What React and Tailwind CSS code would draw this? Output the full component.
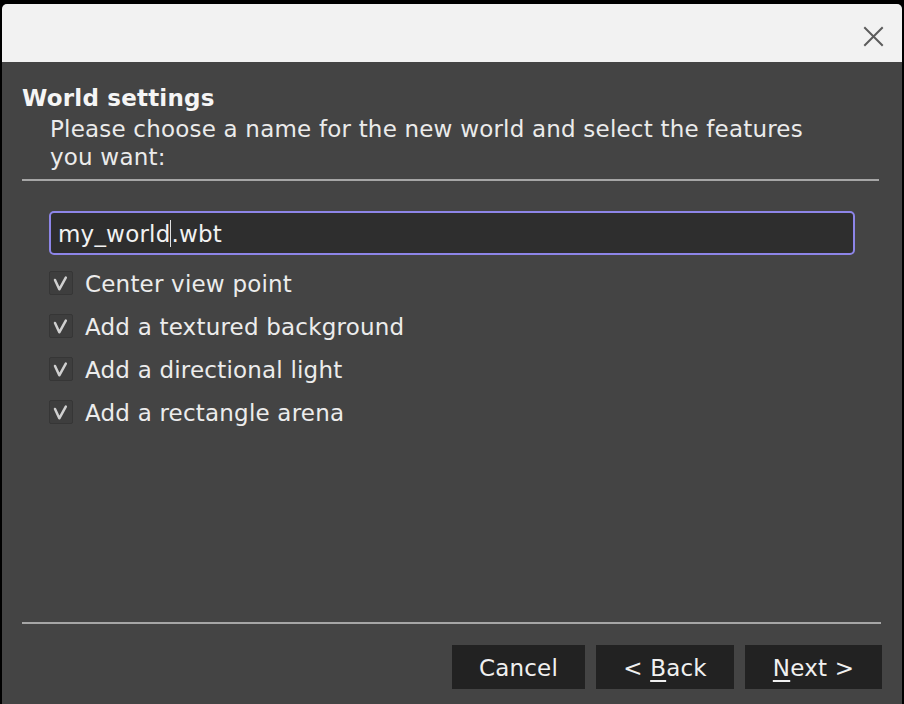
import React from "react";

function Check() {
  return (
    <div className="w-[24px] h-[24px] shrink-0 rounded-[2px] border border-[#363636] bg-[#3e3e3e] relative">
      <svg width="24" height="24" viewBox="0 0 24 24" className="block absolute left-[-1px] top-[-1px]">
        <path d="M6 9 L10.3 18.3 L16.8 6.6" fill="none" stroke="#d0d0d0" strokeWidth="2.5" strokeLinecap="round" strokeLinejoin="round" />
      </svg>
    </div>
  );
}

function Row({ label }) {
  return (
    <div className="h-[43px] flex items-center gap-[12px] pl-[27px]">
      <Check />
      <span className="pt-[3px] text-[23px] leading-[27px] tracking-[0.2px] text-[#ececec]">{label}</span>
    </div>
  );
}

function Btn({ children, w }) {
  return (
    <button className={`h-[44px] ${w} pt-[3px] bg-[#222222] text-[#f0f0f0] text-[23px] leading-[27px] tracking-[0.2px] flex items-center justify-center`}>
      {children}
    </button>
  );
}

export default function App() {
  return (
    <div className="w-[904px] h-[704px] bg-black pt-[4px] pl-[2px] overflow-hidden" style={{ fontFamily: '"DejaVu Sans", Verdana, sans-serif' }}>
      <div className="w-[900px] h-[700px] flex flex-col bg-[#444444] rounded-t-[5px] overflow-hidden">
        <div className="h-[58px] shrink-0 bg-[#f2f2f2] flex items-center justify-end pr-[18px]">
          <svg width="21" height="21" viewBox="0 0 21 21" className="block mt-[7px]">
            <path d="M2 2 L19 19 M19 2 L2 19" stroke="#5c5c5c" strokeWidth="2" strokeLinecap="square" />
          </svg>
        </div>
        <div className="flex-1 flex flex-col pl-[20px] pr-[23px] pb-[15px]">
          <div className="pt-[23px] text-[23px] leading-[27px] font-bold tracking-[0.2px] text-[#f5f5f5]">World settings</div>
          <div className="mt-[3px] pl-[28px] text-[23px] leading-[28px] tracking-[0.2px] text-[#ebebeb] whitespace-nowrap">
            Please choose a name for the new world and select the features
            <br />
            you want:
          </div>
          <div className="mt-[8px] h-[2px] bg-[#a6a6a6]" />
          <div className="mt-[30px] ml-[27px] w-[806px] h-[44px] rounded-[5px] border-2 border-[#8d85e8] bg-[#2e2e2e] flex items-center pl-[7px] pt-[3px] text-[23px] leading-[27px] tracking-[0.2px] text-[#f2f2f2]">
            <span>my_world</span>
            <span className="inline-block w-[1px] h-[27px] mt-[-3px] bg-[#e0e0e0]" />
            <span>.wbt</span>
          </div>
          <div className="mt-[6px] flex flex-col">
            <Row label="Center view point" />
            <Row label="Add a textured background" />
            <Row label="Add a directional light" />
            <Row label="Add a rectangle arena" />
          </div>
          <div className="flex-1" />
          <div className="h-[2px] bg-[#a6a6a6] mr-[-2px]" />
          <div className="mt-[21px] flex justify-end gap-[11px] mr-[-3px]">
            <Btn w="w-[133px]">Cancel</Btn>
            <Btn w="w-[138px]">&lt;&nbsp;<span className="underline underline-offset-[4px]">B</span>ack</Btn>
            <Btn w="w-[137px]"><span className="underline underline-offset-[4px]">N</span>ext&nbsp;&gt;</Btn>
          </div>
        </div>
      </div>
    </div>
  );
}
